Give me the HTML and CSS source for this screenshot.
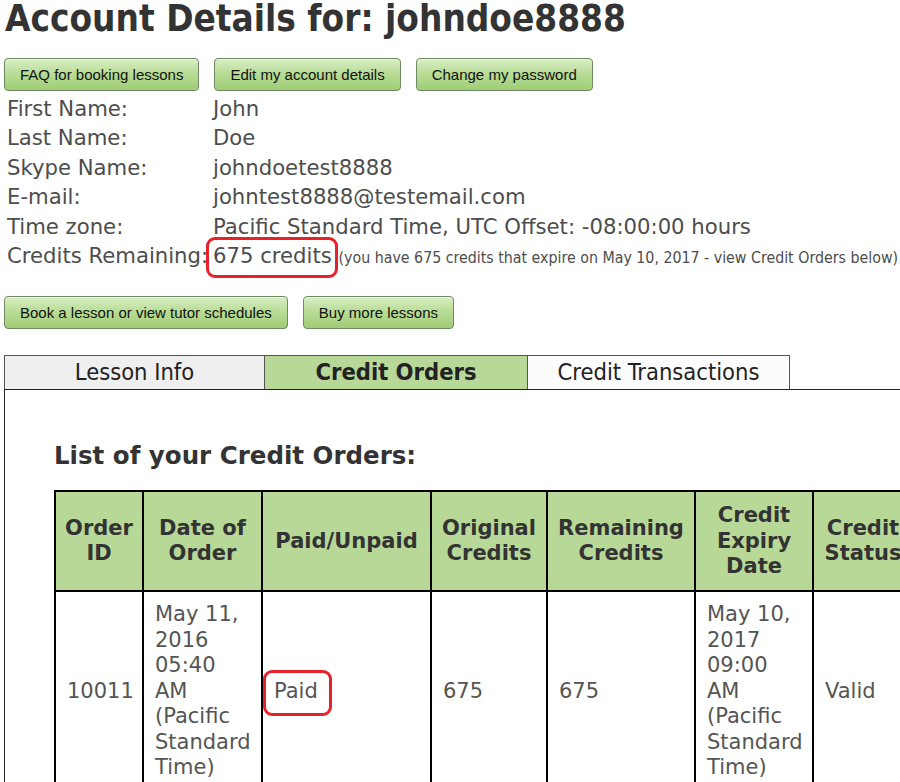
FILE: index.html
```html
<!DOCTYPE html>
<html>
<head>
<meta charset="utf-8">
<link rel="stylesheet" href="styles.css">
</head>
<body>
<h1 class="title">Account Details for: johndoe8888</h1>
<div class="btn-row first">
  <a class="btn">FAQ for booking lessons</a>
  <a class="btn">Edit my account details</a>
  <a class="btn">Change my password</a>
</div>
<div class="info">
  <div class="label">First Name:</div><div class="value">John</div>
  <div class="label">Last Name:</div><div class="value">Doe</div>
  <div class="label">Skype Name:</div><div class="value">johndoetest8888</div>
  <div class="label">E-mail:</div><div class="value">johntest8888@testemail.com</div>
  <div class="label">Time zone:</div><div class="value">Pacific Standard Time, UTC Offset: -08:00:00 hours</div>
  <div class="label">Credits Remaining:</div><div class="value"><span class="mark mark-credits">675 credits</span> <span class="note">(you have 675 credits that expire on May 10, 2017 - view Credit Orders below)</span></div>
</div>
<div class="btn-row second">
  <a class="btn">Book a lesson or view tutor schedules</a>
  <a class="btn">Buy more lessons</a>
</div>
<div class="tabs">
  <div class="tab t1">Lesson Info</div>
  <div class="tab t2 active">Credit Orders</div>
  <div class="tab t3">Credit Transactions</div>
</div>
<div class="panel">
  <h2 class="list-title">List of your Credit Orders:</h2>
  <table class="orders">
    <colgroup>
      <col class="c1"><col class="c2"><col class="c3"><col class="c4"><col class="c5"><col class="c6"><col class="c7">
    </colgroup>
    <thead>
      <tr>
        <th>Order ID</th>
        <th>Date of Order</th>
        <th>Paid/Unpaid</th>
        <th>Original Credits</th>
        <th>Remaining Credits</th>
        <th>Credit Expiry Date</th>
        <th>Credit Status</th>
      </tr>
    </thead>
    <tbody>
      <tr>
        <td>10011</td>
        <td>May 11, 2016 05:40 AM (Pacific Standard Time)</td>
        <td><span class="mark mark-paid">Paid</span></td>
        <td>675</td>
        <td>675</td>
        <td>May 10, 2017 09:00 AM (Pacific Standard Time)</td>
        <td>Valid</td>
      </tr>
    </tbody>
  </table>
</div>
</body>
</html>
```

FILE: styles.css
```css
html, body {
  overflow: hidden;
}
body {
  margin: 0;
  padding: 0 0 0 4px;
  background: #fff;
  font-family: "DejaVu Sans", Verdana, sans-serif;
  color: #4d4d4d;
  width: 1000px;
}
.title {
  margin: 0;
  font-family: "DejaVu Sans", sans-serif;
  font-stretch: condensed;
  font-weight: bold;
  font-size: 36.6px;
  line-height: 38px;
  color: #333;
  padding-left: 1px;
}
.btn-row {
  display: flex;
  gap: 15px;
}
.btn-row.first { margin-top: 20px; }
.btn-row.second { margin-top: 24px; }
.btn {
  display: block;
  box-sizing: border-box;
  height: 33px;
  line-height: 31px;
  padding: 0 15px;
  font-family: "Liberation Sans", Arial, sans-serif;
  font-size: 15px;
  color: #111;
  border: 1px solid #6f8a62;
  border-radius: 4px;
  background: linear-gradient(#d9eec6 0%, #b9dd97 45%, #9fcd75 100%);
  box-shadow: inset 0 1px 0 rgba(255,255,255,0.5);
}
.info {
  display: grid;
  grid-template-columns: 206px auto;
  margin-top: 3px;
  padding-left: 3px;
  font-size: 21.2px;
  line-height: 29.4px;
  white-space: nowrap;
}
.note {
  font-stretch: condensed;
  font-size: 15.8px;
}
.mark {
  position: relative;
}
.mark::after {
  content: "";
  position: absolute;
  border: 3px solid #e8202a;
  border-radius: 9px;
}
.mark-credits::after {
  left: -7px;
  right: -6px;
  top: -6px;
  bottom: -10px;
}
.mark-paid::after {
  left: -11px;
  right: -14px;
  top: -9px;
  bottom: -13px;
}
.tabs {
  display: flex;
  margin-top: 26px;
}
.tab {
  box-sizing: border-box;
  height: 34px;
  line-height: 33px;
  text-align: center;
  font-stretch: condensed;
  font-size: 23.5px;
  color: #222;
  border: 1px solid #555;
  border-bottom: none;
}
.t1 { width: 261px; background: #efefef; }
.t2 { width: 263px; background: #b8d898; font-weight: bold; border-left: none; }
.t3 { width: 262px; background: #fcfcfc; border-left: none; }
.panel {
  border-top: 1px solid #222;
  border-left: 1px solid #222;
  padding: 51px 0 0 49px;
  height: 600px;
}
.list-title {
  margin: 0;
  font-size: 24.5px;
  line-height: 30px;
  font-weight: bold;
  color: #333;
}
.orders {
  margin-top: 19px;
  border-collapse: collapse;
  border: 2px solid #000;
  table-layout: fixed;
  width: 858px;
  font-size: 21px;
}
.c1 { width: 88px; }
.c2 { width: 119px; }
.c3 { width: 169px; }
.c4 { width: 116px; }
.c5 { width: 148px; }
.c6 { width: 118px; }
.c7 { width: 100px; }
.orders th, .orders td {
  border: 2px solid #000;
}
.orders th {
  background: #b8d898;
  color: #333;
  font-weight: bold;
  line-height: 25.5px;
  height: 98px;
  padding: 0 8px;
  text-align: center;
  vertical-align: middle;
}
.orders td {
  color: #555;
  line-height: 25.5px;
  padding: 10px 10px 10px 11px;
  vertical-align: middle;
  text-align: left;
}
```
